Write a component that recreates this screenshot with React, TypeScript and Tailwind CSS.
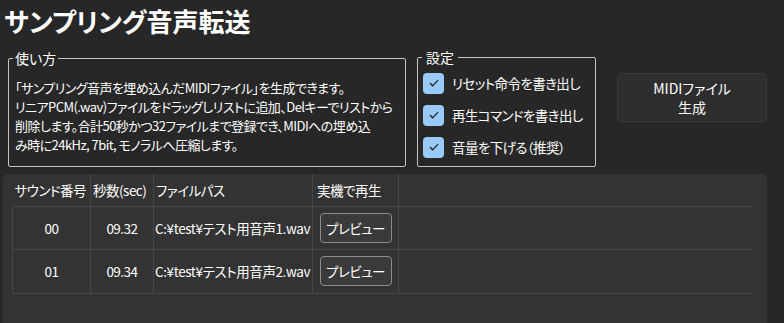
const font = {
  fontFamily: '"Noto Sans CJK JP", "Noto Sans", sans-serif',
};

const rows = [
  { no: "00", sec: "09.32", path: "C:¥test¥テスト用音声1.wav" },
  { no: "01", sec: "09.34", path: "C:¥test¥テスト用音声2.wav" },
];

const options = ["リセット命令を書き出し", "再生コマンドを書き出し", "音量を下げる（推奨）"];

function CheckBox() {
  return (
    <span className="flex h-[21px] w-[21px] shrink-0 items-center justify-center rounded-[4px] bg-[#99c9f7]">
      <svg width="10" height="8" viewBox="0 0 10 8" fill="none">
        <path d="M1 4.2 L3.7 6.8 L9 1.2" stroke="#1c1c1c" strokeWidth="1.2" />
      </svg>
    </span>
  );
}

export default function App() {
  return (
    <div
      className="flex h-[323px] w-[784px] flex-col overflow-hidden bg-[#272727] text-white [font-feature-settings:'palt']"
      style={font}
    >
      {/* Title */}
      <h1 className="h-[44px] pl-[4px] pt-[3px] text-[26px] font-bold leading-[36px]">
        サンプリング音声転送
      </h1>

      {/* Top controls */}
      <div className="flex h-[130px] items-start">
        <fieldset className="ml-[8px] mt-[4px] h-[119px] w-[398px] min-w-0 rounded-[2px] border border-[#c4c4c4]">
          <legend className="ml-[4px] px-[2px] text-[14px] leading-[20px]">使い方</legend>
          <p className="whitespace-nowrap pl-[6px] pt-[10px] text-[13px] leading-[19px] tracking-[-0.55px]">
            「サンプリング音声を埋め込んだMIDIファイル」を生成できます。
            <br />
            リニアPCM(.wav)ファイルをドラッグしリストに追加、Delキーでリストから
            <br />
            削除します。合計50秒かつ32ファイルまで登録でき、MIDIへの埋め込
            <br />
            み時に24kHz, 7bit, モノラルへ圧縮します。
          </p>
        </fieldset>

        <fieldset className="ml-[11px] mt-[3px] h-[120px] w-[179px] min-w-0 rounded-[2px] border border-[#c4c4c4]">
          <legend className="ml-[4px] px-[4px] text-[14px] leading-[20px]">設定</legend>
          <div className="flex flex-col pl-[5px]">
            {options.map((o) => (
              <label key={o} className="flex h-[32px] items-center gap-[8px] whitespace-nowrap text-[13.5px] tracking-[-0.6px]">
                <CheckBox />
                <span>{o}</span>
              </label>
            ))}
          </div>
        </fieldset>

        <button className="ml-[21px] mt-[29px] flex h-[49px] w-[150px] flex-col items-center justify-center rounded-[4px] border border-[#3a3a3a] bg-[#2e2e2e] text-[14px] leading-[19px]">
          <span>MIDIファイル</span>
          <span>生成</span>
        </button>
      </div>

      {/* Table panel */}
      <div className="ml-[3px] w-[764px] flex-1 rounded-t-[5px] bg-[#333333] pl-[9px]">
        <table className="w-[740px] table-fixed border-collapse text-[13.5px] tracking-[-0.5px]">
          <colgroup>
            <col className="w-[78px]" />
            <col className="w-[63px]" />
            <col className="w-[159px]" />
            <col className="w-[86px]" />
            <col />
          </colgroup>
          <thead>
            <tr className="h-[32px] border-b border-[#474747]">
              <th className="whitespace-nowrap border-r border-[#474747] pl-[2px] text-left font-normal">サウンド番号</th>
              <th className="whitespace-nowrap border-r border-[#474747] pl-[2px] text-left font-normal">秒数(sec)</th>
              <th className="whitespace-nowrap border-r border-[#474747] pl-[2px] text-left font-normal">ファイルパス</th>
              <th className="whitespace-nowrap border-r border-[#474747] pl-[4px] text-left font-normal">実機で再生</th>
              <th />
            </tr>
          </thead>
          <tbody>
            {rows.map((r) => (
              <tr key={r.no} className="h-[43.5px] border-b border-[#474747]">
                <td className="border-x border-[#474747] text-center">{r.no}</td>
                <td className="border-r border-[#474747] text-center">{r.sec}</td>
                <td className="overflow-hidden whitespace-nowrap border-r border-[#474747] pl-[1px] text-[13.5px] tracking-[-0.4px]">{r.path}</td>
                <td className="border-r border-[#474747] text-center">
                  <button className="h-[30px] w-[72px] rounded-[4px] border border-[#8c8c8c] bg-[#3a3a3a] text-[13.5px]">
                    プレビュー
                  </button>
                </td>
                <td />
              </tr>
            ))}
          </tbody>
        </table>
      </div>
    </div>
  );
}
